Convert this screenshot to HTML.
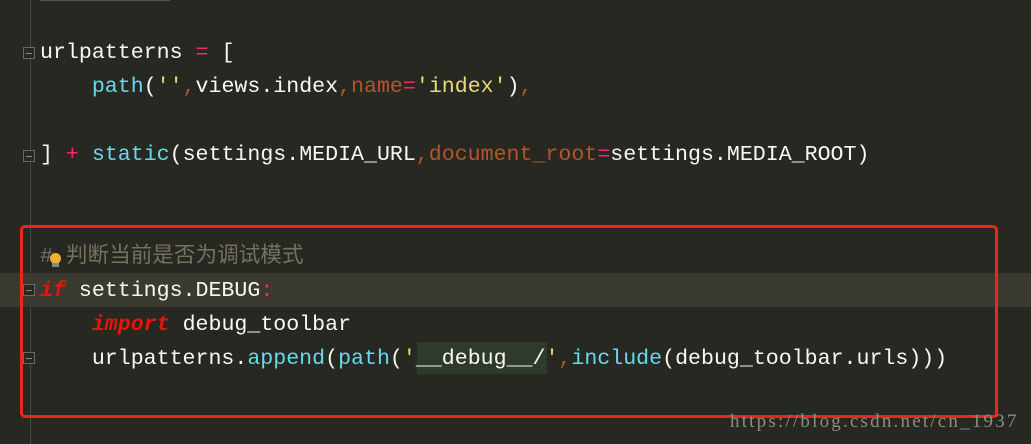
<!DOCTYPE html>
<html><head><meta charset="utf-8"><style>
html,body{margin:0;padding:0;}
body{width:1031px;height:444px;background:#272822;position:relative;overflow:hidden;font-family:"Liberation Mono","Noto Sans CJK SC",monospace;font-size:21.6px;color:#f8f8f2;}
.l{position:absolute;left:40px;height:34px;line-height:34px;white-space:pre;}
.p{color:#f92672}.c{color:#66d9ef}.o{color:#b5542a}.y{color:#e6db74}
.k{color:#e8140c;font-weight:bold;font-style:italic}
.cm{color:#75715e;}
.hl{position:absolute;left:0;top:273px;width:1031px;height:34px;background:#3b3a30;}
.g{position:absolute;left:30px;top:0;width:1px;height:444px;background:#4a4a44;}
.box{position:absolute;left:20px;top:225px;width:972px;height:187px;border:3px solid #f02418;border-radius:5px;}
.fold{position:absolute;left:23px;width:12px;height:12px;border:1px solid #6a6a64;background:#272822;box-sizing:border-box;}
.fold:after{content:"";position:absolute;left:2px;right:2px;top:5px;height:1px;background:#8a8a84;}
.wm{position:absolute;left:730px;top:411px;font-family:"Liberation Serif",serif;font-size:19px;color:#8c8c88;letter-spacing:2.2px;}
</style></head><body>
<div style="position:absolute;left:40px;top:0;width:130px;height:1px;background:#555"></div>
<div class="g"></div>
<div class="hl"></div>
<div class="fold" style="top:47px"></div>
<div class="fold" style="top:150px"></div>
<div class="fold" style="top:284px"></div>
<div class="fold" style="top:352px"></div>
<div class="l" style="top:36px">urlpatterns <span class="p">=</span> [</div>
<div class="l" style="top:70px">    <span class="c">path</span>(<span class="y">''</span><span class="o">,</span>views.index<span class="o">,name</span><span class="p">=</span><span class="y">'index'</span>)<span class="o">,</span></div>
<div class="l" style="top:138px">] <span class="p">+</span> <span class="c">static</span>(settings.MEDIA_URL<span class="o">,document_root</span><span class="p">=</span>settings.MEDIA_ROOT)</div>
<div class="l cm" style="top:240px"># 判断当前是否为调试模式</div>
<div style="position:absolute;left:50px;top:253px;width:11px;height:11px;border-radius:50%;background:#f0b030"></div>
<div style="position:absolute;left:52px;top:263px;width:7px;height:4px;background:#888"></div>
<div class="l" style="top:274px"><span class="k">if</span> settings.DEBUG<span class="p">:</span></div>
<div class="l" style="top:308px">    <span class="k">import</span> debug_toolbar</div>
<div style="position:absolute;left:417px;top:342px;width:130px;height:32px;background:#2e3a2c"></div>
<div class="l" style="top:342px">    urlpatterns.<span class="c">append</span>(<span class="c">path</span>(<span class="y">'</span>__debug__/<span class="y">'</span><span class="o">,</span><span class="c">include</span>(debug_toolbar.urls)))</div>
<div class="box"></div>
<div class="wm">https://blog.csdn.net/cn_1937</div>
</body></html>
